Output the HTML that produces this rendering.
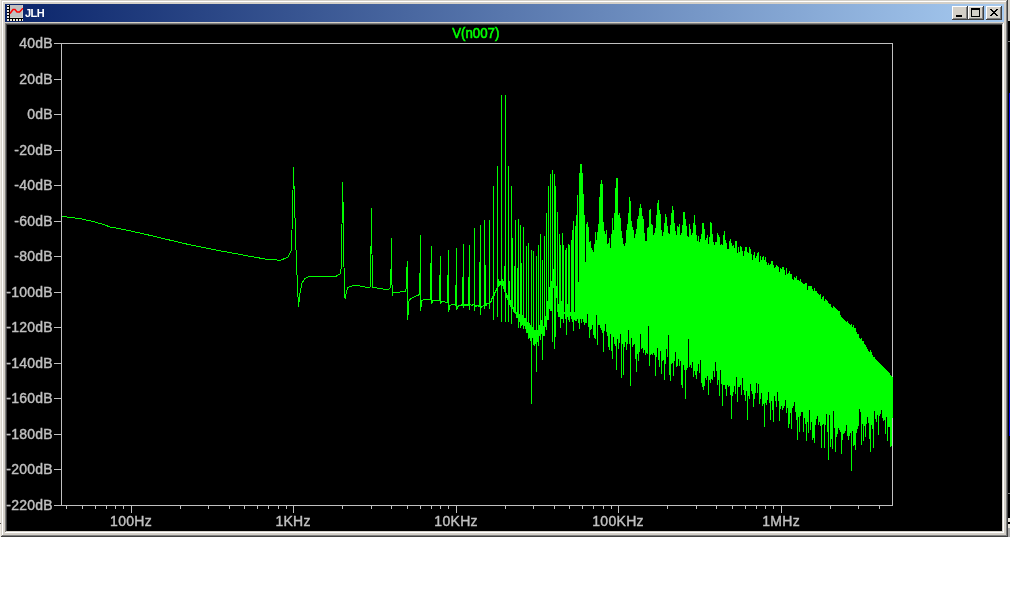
<!DOCTYPE html>
<html><head><meta charset="utf-8"><title>JLH</title>
<style>
html,body{margin:0;padding:0;background:#fff;}
body{width:1010px;height:600px;position:relative;overflow:hidden;font-family:"Liberation Sans",Arial,sans-serif;}
#edge{position:absolute;left:0;top:0;width:1px;height:537px;background:#ebe8e2;}
#win{position:absolute;left:1px;top:0;width:1007px;height:537px;background:#d4d0c8;box-sizing:border-box;
 box-shadow:inset -1px -1px 0 #404040,inset 1px 1px 0 #d4d0c8,inset -2px -2px 0 #808080,inset 2px 2px 0 #fff;}
#cap{position:absolute;left:4px;top:4px;width:999px;height:18px;background:linear-gradient(to right,#0a246a,#a6caf0);}
#title{position:absolute;left:20px;top:2px;color:#fff;font-weight:bold;font-size:11px;line-height:14px;letter-spacing:-0.5px;will-change:transform;}
.btn{position:absolute;top:2px;width:16px;height:14px;background:#d4d0c8;box-sizing:border-box;
 box-shadow:inset -1px -1px 0 #404040,inset 1px 1px 0 #fff,inset -2px -2px 0 #808080,inset 2px 2px 0 #d4d0c8;}
#client{position:absolute;left:4px;top:23px;width:999px;height:510px;background:#000;box-sizing:border-box;
 box-shadow:inset -1px -1px 0 #fff,inset 1px 1px 0 #808080,inset -2px -2px 0 #d4d0c8,inset 2px 2px 0 #404040;}
#nbr{position:absolute;left:1008px;top:0;width:2px;height:537px;background:#000;}
#plot{position:absolute;left:0;top:0;}
#plot text{font-family:"Liberation Sans",Arial,sans-serif;font-size:14px;fill:#c0c0c0;stroke:#c0c0c0;stroke-width:0.4px;}
#plot{will-change:transform;}
</style></head><body>
<div id="edge"><div style="position:absolute;left:0;top:523px;width:1px;height:1px;background:#505050"></div></div>
<div id="win">
 <div id="cap">
  <svg width="16" height="16" viewBox="0 0 16 16" style="position:absolute;left:2px;top:1px" shape-rendering="crispEdges">
   <path d="M0 0h3v13h13v3h-16z" fill="#000"/>
   <rect x="3" y="0" width="13" height="13" fill="#c0c0c0"/>
   <path d="M3 12.5H16M15.5 0V13" stroke="#d0d0cc" stroke-width="1" fill="none"/>
   <path d="M0 0h2v1h-2zM0 2h2v2h-2zM0 5h2v2h-2zM0 8h2v2h-2zM0 11h2v2h-2zM0 14h2v2h-2zM3 14h2v2h-2zM6 14h2v2h-2zM9 14h2v2h-2zM12 14h2v2h-2zM15 14h1v2h-1z" fill="#ece8dc"/>
   <polyline points="3,8.5 6,4.5 8,4.5 10,7 12.5,7 16,3.2" stroke="#ff0000" stroke-width="1.5" fill="none" shape-rendering="auto"/>
  </svg>
  <div id="title">JLH</div>
  <div class="btn" style="left:947px"><svg width="16" height="14" shape-rendering="crispEdges" style="position:absolute;left:0;top:0"><rect x="4" y="9" width="6" height="2" fill="#000"/></svg></div>
  <div class="btn" style="left:963px"><svg width="16" height="14" shape-rendering="crispEdges" style="position:absolute;left:0;top:0"><path d="M3 2h9v9h-9zM4 4v6h7v-6z" fill="#000" fill-rule="evenodd"/></svg></div>
  <div class="btn" style="left:981px"><svg width="16" height="14" shape-rendering="crispEdges" style="position:absolute;left:0;top:0"><path d="M4 3h2v1h1v1h2v-1h1v-1h2v1h-1v1h-1v1h-1v1h1v1h1v1h1v1h-2v-1h-1v-1h-2v1h-1v1h-2v-1h1v-1h1v-1h1v-1h-1v-1h-1v-1h-1z" fill="#000"/></svg></div>
 </div>
 <div id="client"></div>
</div>
<div id="nbr"><div style="position:absolute;left:0;top:0;width:2px;height:21px;background:#d4d0c8"></div><div style="position:absolute;left:0;top:41px;width:2px;height:1px;background:#808080"></div><div style="position:absolute;left:1px;top:93px;width:1px;height:343px;background:#0000e0"></div><div style="position:absolute;left:0;top:493px;width:2px;height:1px;background:#808080"></div><div style="position:absolute;left:0;top:518px;width:2px;height:4px;background:#e8e4dc"></div><div style="position:absolute;left:0;top:524px;width:2px;height:4px;background:#e8e4dc"></div><div style="position:absolute;left:0;top:528px;width:2px;height:9px;background:#a8a8a8"></div></div>
<svg id="plot" width="1010" height="600" viewBox="0 0 1010 600">
 <g shape-rendering="crispEdges" fill="none" stroke-width="1">
  <path stroke="#c0c0c0" d="M61.5 43V506M892.5 43V506M54 43.5H893M54 505.5H893M54 79.5H61M54 114.5H61M54 150.5H61M54 185.5H61M54 221.5H61M54 256.5H61M54 292.5H61M54 327.5H61M54 363.5H61M54 398.5H61M54 434.5H61M54 469.5H61M66.5 506V509M82.5 506V509M95.5 506V509M106.5 506V509M115.5 506V509M123.5 506V509M131.5 506V513M180.5 506V509M208.5 506V509M229.5 506V509M244.5 506V509M257.5 506V509M268.5 506V509M278.5 506V509M286.5 506V509M293.5 506V513M342.5 506V509M371.5 506V509M391.5 506V509M407.5 506V509M420.5 506V509M431.5 506V509M440.5 506V509M448.5 506V509M456.5 506V513M505.5 506V509M533.5 506V509M554.5 506V509M569.5 506V509M582.5 506V509M593.5 506V509M603.5 506V509M611.5 506V509M618.5 506V513M667.5 506V509M696.5 506V509M716.5 506V509M732.5 506V509M745.5 506V509M756.5 506V509M765.5 506V509M773.5 506V509M781.5 506V513M830.5 506V509M858.5 506V509M879.5 506V509"/>
  <path stroke="#00ff00" stroke-linejoin="round" d="M62 216.5 L70 217.3 L82 219 L95 222 L105 225 L110 227 L120 228.7 L140 233 L160 237.7 L183 243.3 L216 250 L250 256.3 L265 259 L270 259.5 L280.7 260.3 L288 257 L291 251.5 L292 230 L293 190 L293.5 168 L294 185 L295 218 L296 250 L297 275 L298 297 L298.5 306.5 L299.5 297 L300.5 290 L302 283 L304.7 278.7 L309 276.5 L320 276.3 L336 276.3 L340 274 L341.5 267 L342 225 L342.5 183 L343.3 212 L344 267 L344.8 297 L345.3 299 L346.4 291.5 L348 287.5 L352.7 285.6 L357 285.3 L365 287 L369 287.7 L370.4 287 L371 247 L371.4 208 L371.9 247 L372.5 287 L373 287.2 L380 288.5 L388 289.8 L390 288.3 L390.8 286 L391.4 238 L392 285 L392.5 295.2 L393.2 292.3 L400 292 L405 291.8 L406.3 288.7 L407.2 261.3 L407.8 320 L408.5 303 L409.5 299.6 L413 297.4 L418.5 295 L419.8 294 L420.4 235 L420.8 310.4 L421.4 302 L422 300.6 L425 299.2 L429 299.6 L430.6 299.5 L431.2 246 L431.7 304 L432.4 300.8 L436 300.2 L439.6 301 L440.3 256 L440.8 303.5 L441.5 301.7 L445 302 L447.7 302.5 L448.3 250 L448.8 311.5 L449.6 305.5 L452 304.6 L455.8 305.2 L456.4 248 L456.9 310 L457.6 306"/>
  <path stroke="#00ff00" d="M458.5 305V307M459.5 305V306M460.5 305V306M461.5 304V306M462.5 304V306M463.5 305V306M464.5 304V306M465.5 304V306M466.5 304V306M467.5 304V306M468.5 304V306M469.5 304V305M470.5 304V305M471.5 305V306M472.5 304V306M473.5 304V305M474.5 304V306M475.5 305V307M476.5 305V307M477.5 305V306M478.5 305V307M479.5 305V307M480.5 305V308M481.5 306V308M482.5 306V307M483.5 305V306M484.5 305V306M485.5 305V306M486.5 303V306M487.5 303V304M488.5 303V304M489.5 302V304M490.5 301V303M491.5 298V302M492.5 296V299M493.5 295V297M494.5 292V295M495.5 290V293M496.5 288V291M497.5 282V288M498.5 281V287M499.5 281V286M500.5 281V285M501.5 280V288M502.5 279V286M503.5 281V289M504.5 286V292M505.5 290V295M506.5 293V298M507.5 295V300M508.5 298V304M509.5 299V305M510.5 300V307M511.5 303V309M512.5 306V309M513.5 307V312M514.5 308V313M515.5 310V314M516.5 312V318M517.5 313V318M518.5 314V322M519.5 314V322M520.5 315V325M521.5 316V326M522.5 315V325M523.5 316V329M524.5 318V326M525.5 318V329M526.5 320V333M527.5 322V333M528.5 322V336M529.5 323V338M530.5 325V341M531.5 326V341M532.5 327V338M533.5 329V345M534.5 330V346M535.5 330V344M536.5 331V347M537.5 330V342M538.5 327V339M539.5 325V336M540.5 322V335M541.5 320V334M542.5 322V340M543.5 326V336M544.5 321V333M545.5 316V327M546.5 309V330M547.5 301V320M548.5 293V311M549.5 287V309M550.5 281V304M551.5 281V311M552.5 272V292M553.5 269V288M554.5 271V301M555.5 272V297M556.5 286V298M557.5 289V312M558.5 304V317M559.5 302V314M560.5 305V319M561.5 301V319M562.5 307V319M563.5 306V317M564.5 312V314M565.5 306V316M566.5 307V318M567.5 304V317M568.5 308V320M569.5 309V317M570.5 312V316M571.5 308V316M572.5 309V320M573.5 310V318M574.5 312V320M575.5 309V320M576.5 310V321M577.5 310V319M578.5 282V321M463.5 244V308M469.5 245V310M474.5 228V311M480.5 225V315M484.5 220V309M489.5 220V309M493.5 186V320M497.5 166V317M501.5 95V322M505.5 95V322M508.5 166V322M511.5 186V324M515.5 220V314M518.5 219V328M520.5 225V328M523.5 227V329M526.5 246V333M528.5 243V339M531.5 250V404M533.5 251V342M536.5 256V372M538.5 245V346M540.5 234V340M542.5 260V360M544.5 236V336M546.5 213V330M548.5 186V320M550.5 174V311M552.5 170V342M554.5 174V349M555.5 186V337M557.5 212V309M559.5 234V317M560.5 245V328M562.5 233V317M563.5 245V323M565.5 250V319M566.5 248V335M568.5 244V320M569.5 245V322M571.5 240V319M572.5 230V322M573.5 221V331M575.5 226V321M576.5 215V321M577.5 195V319M462.5 277V306M468.5 277V306M479.5 262V307M485.5 265V306M494.5 294V296M498.5 279V282M502.5 281V281M504.5 266V286M509.5 281V300M512.5 238V306M514.5 266V310M517.5 268V314M521.5 263V316M578.5 282V323M579.5 173V329M580.5 164V319M581.5 164V323M582.5 173V319M583.5 194V322M584.5 215V325M585.5 262V323M586.5 224V323M587.5 222V314M588.5 227V327M589.5 242V338M590.5 241V330M591.5 248V329M592.5 250V325M593.5 252V335M594.5 244V338M595.5 232V339M596.5 240V315M597.5 232V345M598.5 224V325M599.5 197V325M600.5 184V328M601.5 180V330M602.5 184V333M603.5 222V352M604.5 231V331M605.5 234V324M606.5 230V332M607.5 244V336M608.5 243V347M609.5 238V350M610.5 248V334M611.5 234V351M612.5 218V359M613.5 230V337M614.5 213V344M615.5 188V346M616.5 178V370M617.5 178V339M618.5 215V349M619.5 213V343M620.5 218V334M621.5 231V378M622.5 238V344M623.5 244V375M624.5 246V347M625.5 243V342M626.5 230V350M627.5 224V344M628.5 213V330M629.5 197V344M630.5 201V386M631.5 221V338M632.5 227V347M633.5 230V345M634.5 238V344M635.5 234V359M636.5 229V372M637.5 219V354M638.5 216V361M639.5 208V352M640.5 204V334M641.5 208V349M642.5 216V348M643.5 219V353M644.5 233V350M645.5 241V355M646.5 241V353M647.5 228V354M648.5 227V326M649.5 210V366M650.5 209V355M651.5 224V354M652.5 225V355M653.5 235V353M654.5 233V355M655.5 228V376M656.5 215V357M657.5 203V348M658.5 200V360M659.5 210V367M660.5 214V351M661.5 230V374M662.5 236V361M663.5 232V360M664.5 223V380M665.5 214V364M666.5 217V349M667.5 226V357M668.5 233V335M669.5 234V375M670.5 225V381M671.5 213V364M672.5 206V363M673.5 210V376M674.5 223V361M675.5 231V352M676.5 235V367M677.5 226V366M678.5 227V359M679.5 224V366M680.5 235V361M681.5 233V385M682.5 225V388M683.5 212V365M684.5 212V370M685.5 219V399M686.5 226V370M687.5 236V368M688.5 237V339M689.5 224V367M690.5 229V365M691.5 235V368M692.5 233V362M693.5 223V377M694.5 215V371M695.5 225V375M696.5 235V379M697.5 241V371M698.5 236V364M699.5 242V373M700.5 239V360M701.5 234V383M702.5 223V387M703.5 223V390M704.5 229V386M705.5 240V378M706.5 238V380M707.5 235V376M708.5 244V395M709.5 237V380M710.5 222V383M711.5 223V379M712.5 234V380M713.5 242V371M714.5 245V377M715.5 242V362M716.5 242V371M717.5 233V385M718.5 235V380M719.5 237V396M720.5 245V370M721.5 244V384M722.5 245V406M723.5 235V385M724.5 231V385M725.5 240V389M726.5 243V396M727.5 249V385M728.5 249V387M729.5 241V386M730.5 239V395M731.5 243V419M732.5 246V396M733.5 245V392M734.5 248V386M735.5 241V394M736.5 241V377M737.5 253V402M738.5 247V387M739.5 252V387M740.5 246V385M741.5 247V395M742.5 251V378M743.5 256V390M744.5 251V395M745.5 247V401M746.5 247V391M747.5 252V420M748.5 253V396M749.5 247V399M750.5 249V384M751.5 254V391M752.5 260V394M753.5 255V407M754.5 252V399M755.5 258V393M756.5 256V383M757.5 253V393M758.5 252V384M759.5 262V404M760.5 256V399M761.5 260V393M762.5 257V406M763.5 256V404M764.5 260V427M765.5 257V403M766.5 262V405M767.5 265V400M768.5 263V392M769.5 265V403M770.5 264V420M771.5 261V401M772.5 261V410M773.5 265V422M774.5 268V396M775.5 267V401M776.5 265V407M777.5 266V392M778.5 267V401M779.5 272V421M780.5 268V409M781.5 269V406M782.5 267V410M783.5 267V408M784.5 270V406M785.5 275V400M786.5 268V413M787.5 274V408M788.5 273V428M789.5 271V424M790.5 274V413M791.5 274V429M792.5 279V408M793.5 280V406M794.5 277V402M795.5 278V412M796.5 276V420M797.5 280V440M798.5 280V417M799.5 281V432M800.5 279V416M801.5 282V412M802.5 283V412M803.5 284V432M804.5 284V418M805.5 283V424M806.5 283V441M807.5 290V422M808.5 286V433M809.5 286V410M810.5 286V430M811.5 286V422M812.5 289V440M813.5 291V438M814.5 288V443M815.5 291V425M816.5 291V419M817.5 293V416M818.5 294V425M819.5 295V422M820.5 294V426M821.5 299V448M822.5 297V425M823.5 296V424M824.5 301V448M825.5 299V425M826.5 300V414M827.5 301V432M828.5 303V460M829.5 304V415M830.5 304V447M831.5 307V439M832.5 308V449M833.5 306V411M834.5 307V428M835.5 308V452M836.5 309V437M837.5 310V434M838.5 311V428M839.5 311V430M840.5 315V432M841.5 317V454M842.5 318V440M843.5 319V434M844.5 320V433M845.5 321V431M846.5 322V425M847.5 321V436M848.5 323V440M849.5 324V436M850.5 325V433M851.5 324V471M852.5 327V431M853.5 325V446M854.5 328V445M855.5 328V450M856.5 332V433M857.5 334V429M858.5 334V426M859.5 338V409M860.5 339V412M861.5 338V445M862.5 341V424M863.5 341V441M864.5 344V426M865.5 345V437M866.5 347V424M867.5 349V417M868.5 351V423M869.5 352V439M870.5 350V452M871.5 352V425M872.5 355V429M873.5 357V448M874.5 357V411M875.5 359V419M876.5 360V422M877.5 361V415M878.5 362V435M879.5 363V416M880.5 364V414M881.5 365V410M882.5 366V418M883.5 367V421M884.5 368V420M885.5 369V434M886.5 370V417M887.5 371V441M888.5 372V427M889.5 373V427M890.5 375V447M891.5 376V446M892.5 377V418"/>
 </g>
 <g><text x="52.7" y="48.4" text-anchor="end" letter-spacing="0.2">40dB</text><text x="52.7" y="84.4" text-anchor="end" letter-spacing="0.2">20dB</text><text x="52.7" y="119.4" text-anchor="end" letter-spacing="0.2">0dB</text><text x="52.7" y="155.4" text-anchor="end" letter-spacing="0.2">-20dB</text><text x="52.7" y="190.4" text-anchor="end" letter-spacing="0.2">-40dB</text><text x="52.7" y="226.4" text-anchor="end" letter-spacing="0.2">-60dB</text><text x="52.7" y="261.4" text-anchor="end" letter-spacing="0.2">-80dB</text><text x="52.7" y="297.4" text-anchor="end" letter-spacing="0.2">-100dB</text><text x="52.7" y="332.4" text-anchor="end" letter-spacing="0.2">-120dB</text><text x="52.7" y="368.4" text-anchor="end" letter-spacing="0.2">-140dB</text><text x="52.7" y="403.4" text-anchor="end" letter-spacing="0.2">-160dB</text><text x="52.7" y="439.4" text-anchor="end" letter-spacing="0.2">-180dB</text><text x="52.7" y="474.4" text-anchor="end" letter-spacing="0.2">-200dB</text><text x="52.7" y="510.4" text-anchor="end" letter-spacing="0.2">-220dB</text><text x="131.1" y="526" text-anchor="middle" letter-spacing="0.3">100Hz</text><text x="293.1" y="526" text-anchor="middle" letter-spacing="0.3">1KHz</text><text x="456.1" y="526" text-anchor="middle" letter-spacing="0.3">10KHz</text><text x="618.1" y="526" text-anchor="middle" letter-spacing="0.3">100KHz</text><text x="781.1" y="526" text-anchor="middle" letter-spacing="0.3">1MHz</text></g>
 <text x="452.2" y="37.7" style="fill:#00ff00;stroke:#00ff00;stroke-width:0.6px;font-size:14px" textLength="47.2" lengthAdjust="spacingAndGlyphs">V(n007)</text>
</svg>
</body></html>
